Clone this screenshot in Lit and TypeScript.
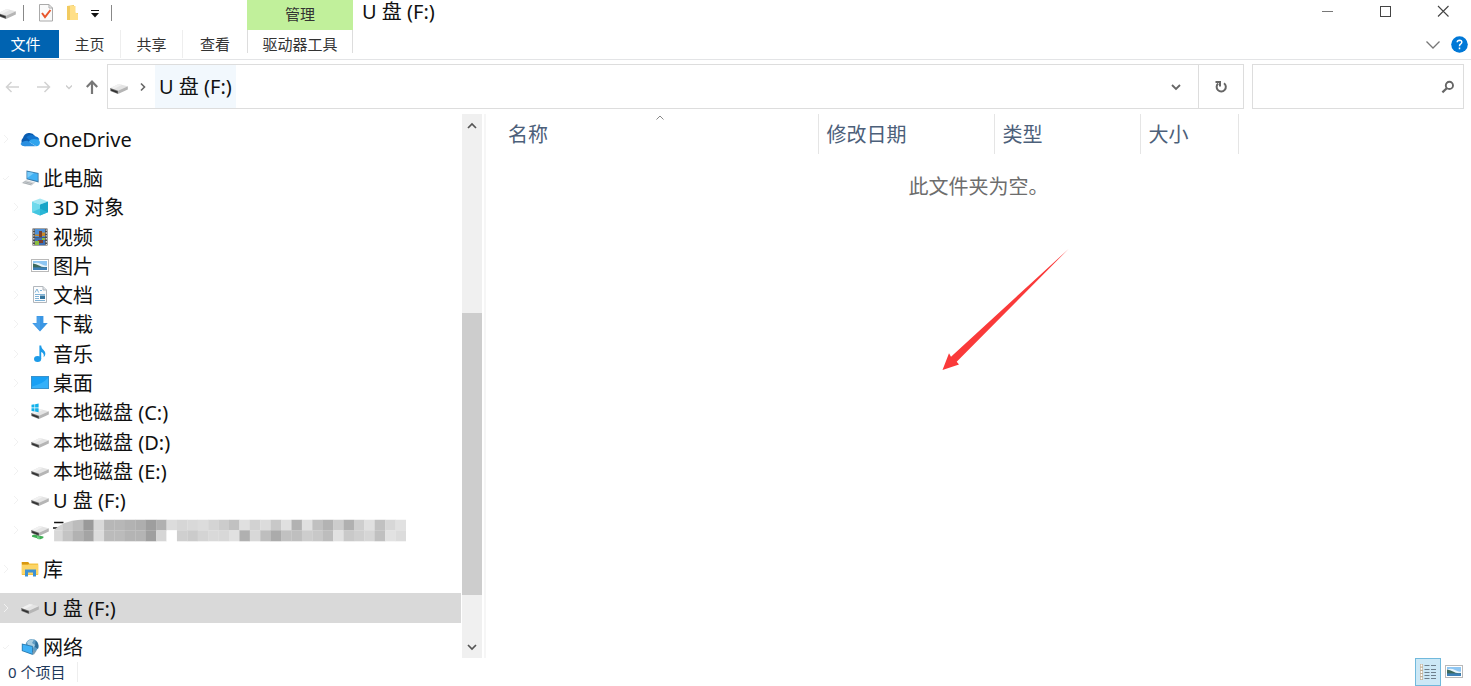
import { LitElement, html, svg, css, type TemplateResult } from "lit";
import { customElement, state } from "lit/decorators.js";

const driveShape = svg`
  <path d="M0.4 6 L8.6 2 L17.8 4.2 L8 9 Z" fill="#e4e4e4"/>
  <path d="M0.4 6 L8.6 2 L12 2.8 L3.6 7.2 Z" fill="#f1f1f1"/>
  <path d="M0.2 6 L8 8.8 V12 L0.4 9 Z" fill="#6a6a6a"/>
  <path d="M1 7.2 L7.4 9.4 V10.9 L1 8.6 Z" fill="#2e2e2e"/>
  <path d="M8 8.8 L17.8 4.2 V7.4 L8 12 Z" fill="#b5b5b5"/>`;

const pictureShape = svg`
  <rect x="0.5" y="2.5" width="17" height="12" fill="#fff" stroke="#b9b9b9"/>
  <rect x="2" y="4" width="14" height="9" fill="#8ec6f2"/>
  <path d="M2 6.4 Q6 4.6 10 7 T16 8.6 V10.4 H2 Z" fill="#e8f4fc"/>
  <path d="M2 6.4 Q5 6.6 8 8.6 T16 10 V11 H2 Z" fill="#3d6a5d"/>
  <rect x="2" y="10.4" width="14" height="2.6" fill="#3d80b8"/>`;

const shapes: Record<string, TemplateResult> = {
  drive: driveShape,
  picture: pictureShape,
  cloud: svg`
    <g transform="translate(-1.6 -1.4) scale(1.14)">
      <path d="M5 15.5 A4.4 4.4 0 0 1 3.2 8 A5.8 5.8 0 0 1 13.6 6.4 L9 12 Z" fill="#0a5cb0"/>
      <path d="M6 7.6 A6 6 0 0 1 14 6.8 A4.6 4.6 0 0 1 17.6 9.4 L12 13 Z" fill="#1374ce"/>
      <path d="M1 13.5 Q3 10.5 7 10.6 L14.5 15.5 H4.4 Q2 15.5 1 13.5 Z" fill="#2a8fe0"/>
      <path d="M8 11.4 Q11 8.6 14.6 9.4 Q18 9.4 18 12.4 Q17.8 15.4 14.8 15.5 Z" fill="#2fa4ee"/>
    </g>`,
  computer: svg`
    <path d="M5.5 1.5 L17.6 4 V13.4 L5.5 10.2 Z" fill="#3e7ca9"/>
    <path d="M6.4 2.7 L16.7 4.8 V12.1 L6.4 9.4 Z" fill="#42b1f4"/>
    <path d="M6.4 2.7 L13 4 L6.4 9 Z" fill="#7accfa"/>
    <path d="M5 11 L14.5 13.4 L10.4 16.6 L0.4 14 Z" fill="#d4d7da"/>
    <path d="M3.5 12.6 L11.6 14.8 M2 13.6 L10.4 15.9" stroke="#979da2" stroke-width=".7"/>`,
  cube: svg`
    <path d="M9 0.6 L17 3.4 L9 6.6 L1 3.4 Z" fill="#a5e8f4"/>
    <path d="M1 3.4 L9 6.6 V17.4 L1 14.2 Z" fill="#6fd9ec"/>
    <path d="M17 3.4 L9 6.6 V17.4 L17 14.2 Z" fill="#18a5c8"/>
    <path d="M9 10.4 L17 14.2 L9 17.4 L1 14.2 Z" fill="#31bddb" opacity=".7"/>`,
  video: svg`
    <rect x="1.5" y="0.5" width="15" height="17" fill="#4b4b4b"/>
    <rect x="4" y="1" width="10" height="8" fill="#4d8fd6"/>
    <rect x="4" y="9.5" width="10" height="7.5" fill="#3c6fb4"/>
    <path d="M4 6.5 H8 V4.5 H14 V8 H4 Z" fill="#c98b2b"/>
    <path d="M8 3 H11 V9 H8 Z M7 12 H12 V15 H7 Z" fill="#7b3f2c"/>
    <path d="M4 13 H8 V17 H4 Z M11 10 H14 V12 H11 Z" fill="#8bbd42"/>
    <path d="M2.8 1.4 V17 M15.3 1.4 V17" stroke="#e6e6e6" stroke-width="1.2" stroke-dasharray="1.4 1.5"/>`,
  document: svg`
    <path d="M2.5 0.5 H12 L15.5 4 V16.5 H2.5 Z" fill="#fbfcfd" stroke="#b2b7bc"/>
    <path d="M12 0.5 V4 H15.5" fill="#dfe3e7" stroke="#b2b7bc"/>
    <path d="M4 6.5 L6 3 L7.6 6.5 M9 4.5 H11 M4 8.5 H14 M4 10.5 H8 M4 12.5 H8 M4 14.5 H14" stroke="#7fb2d6" fill="none"/>
    <rect x="9" y="9.5" width="5" height="3.5" fill="#35759e"/>`,
  download: svg`<path d="M5.6 1 H12.4 V8 H16.8 L9 16.6 L1.2 8 H5.6 Z" fill="#3a96e4"/><path d="M6 1.5 H9 V15 L2 8.5 H6 Z" fill="#54a9ee" opacity=".6"/>`,
  music: svg`
    <ellipse cx="6.6" cy="14" rx="3.6" ry="3" fill="#1c9be8"/>
    <path d="M8.4 0.5 H10.2 C10.4 4.8 15 5.4 14.3 9.2 Q14 11 12.6 12.2 Q13.6 8.4 10.2 7 V14 H8.4 Z" fill="#1c9be8"/>`,
  desktop: svg`
    <rect x="0.5" y="2.5" width="17" height="12" fill="#18a0f5" stroke="#3a92cc"/>
    <path d="M1 12.4 Q11 10.4 17 4 V14 H1 Z" fill="#45b8fb" opacity=".65"/>`,
  system: svg`
    <g transform="translate(0 4)">${driveShape}</g>
    <path d="M0.5 1.8 L3.5 1.3 V4.6 H0.5 Z M4.1 1.2 L7.6 0.6 V4.6 H4.1 Z M0.5 5.2 H3.5 V8.5 L0.5 8 Z M4.1 5.2 H7.6 V9.2 L4.1 8.6 Z" fill="#12b1ea"/>`,
  netdrive: svg`
    <path d="M1 11.4 L3 10.4 L12.4 12.6 V14 L9.4 15.2 L1 12.8 Z" fill="#3fae54"/>
    ${driveShape}
    <path d="M6 12 L8.6 12.6 V15.4 L6 14.8 Z" fill="#70cf83"/>`,
  library: svg`
    <path d="M0.8 2 H7 L8.4 3.6 H17.2 V15 H0.8 Z" fill="#f5c443"/>
    <path d="M0.8 2 H7 L8.2 3.5 L7 4.5 H0.8 Z" fill="#d9980f"/>
    <path d="M0.8 5 H17.2 V14 H0.8 Z" fill="#fcd566"/>
    <path d="M4 16.4 V9.4 H15 V16.4 H12 V12.6 H7 V16.4 Z" fill="#3d91d2"/>`,
  network: svg`
    <circle cx="11" cy="7.6" r="6.6" fill="#5e9cc4"/>
    <path d="M6 4 Q9 0.8 13 1.4 L11 5 L14 7 L12 10 L7 8 Z" fill="#a9cde0"/>
    <path d="M14.6 2.4 Q18.6 6 17 11 L14 9 Z" fill="#2f6e99"/>
    <path d="M0.8 5.4 L11.8 8 V17 L0.8 13 Z" fill="#2878ac"/>
    <path d="M1.6 6.5 L11 8.7 V15.7 L1.6 12.4 Z" fill="#3fb1f6"/>
    <path d="M12 12 L15.4 13 L13 16.4 L12 16.6 Z" fill="#7d9db0"/>`,
};

const icon = (name: string) =>
  html`<svg class="icon" viewBox="0 0 18 18" aria-hidden="true">${shapes[name]}</svg>`;

type Place = { icon: string; label: string; hidden?: boolean; open?: boolean };

const devices: Place[] = [
  { icon: "cube", label: "3D 对象" },
  { icon: "video", label: "视频" },
  { icon: "picture", label: "图片" },
  { icon: "document", label: "文档" },
  { icon: "download", label: "下载" },
  { icon: "music", label: "音乐" },
  { icon: "desktop", label: "桌面" },
  { icon: "system", label: "本地磁盘 (C:)" },
  { icon: "drive", label: "本地磁盘 (D:)" },
  { icon: "drive", label: "本地磁盘 (E:)" },
  { icon: "drive", label: "U 盘 (F:)" },
  { icon: "netdrive", label: "", hidden: true },
];

const mosaic = [
  "d4 c8 bc 9a d9 b7 b7 b2 ae 9e b0 dc d6 d9 dc d4 cc c1 e0 d2 dc c8 e0 b2 e0 c0 b3 cc b0 ce e0 c1 d7 e1",
  "d8 c4 b2 a4 dc bb bb b4 b4 9f d6 ff cf cb d4 d9 d8 e1 b0 d8 be ab c1 bf cd c8 bd e1 c9 cf d6 c0 e2 dc",
].map((row) => row.split(" "));

@customElement("app-root")
export class AppRoot extends LitElement {
  @state() private selected = "root-usb";

  static styles = css`
    :host {
      display: flex;
      flex-direction: column;
      height: 100vh;
      background: #fff;
      color: #111;
      font: 20px/28px "Noto Sans", "Noto Sans CJK SC", sans-serif;
    }
    * { box-sizing: border-box; }
    button, input {
      font: inherit;
      color: inherit;
      background: none;
      border: 0;
      padding: 0;
      margin: 0;
      border-radius: 0;
    }
    svg { display: block; fill: none; flex: none; }
    ul { list-style: none; margin: 0; padding: 0; }
    .icon { width: 18px; height: 18px; overflow: visible; }
    .small { font-size: 15px; line-height: 20px; color: #333; }

    .titlebar { display: flex; height: 30px; flex: none; }
    .quick { display: flex; align-items: center; width: 247px; height: 26px; gap: 7px; }
    .divider { width: 1px; height: 16px; background: #888; }
    .context { width: 106px; background: #c1f09b; text-align: center; padding-top: 4px; }
    .title { margin: 0; padding: 0 9px; font-size: 20px; line-height: 24px; font-weight: 400; flex: 1; }
    .window { display: flex; gap: 44px; padding-right: 21px; height: 22px; align-items: center; }

    .ribbon { display: flex; height: 30px; flex: none; border-bottom: 1px solid #e3e4e6; }
    .tab { width: 62px; height: 28px; border-right: 1px solid #eee; }
    .tab.file { width: 59px; background: #0063b1; color: #fff; padding-right: 8px; border: 0; }
    .tab.last { width: 64px; border: 0; }
    .tab.tools { width: 106px; height: 23px; border: 1px solid #ddd; border-width: 0 1px; padding-top: 4px; }
    .ribbon-end { display: flex; align-items: center; gap: 10px; margin-left: auto; padding-right: 3px; }

    .nav { display: flex; height: 54px; flex: none; padding: 4px 7px 5px 5px; }
    .history { display: flex; align-items: center; width: 102px; gap: 13px; }
    .address { display: flex; flex: 1; border: 1px solid #ddd; align-items: center; }
    .address > .icon { margin: 8px 11px 0 2px; }
    .crumb { align-self: stretch; padding: 0 4px; margin-left: 8px; background: #f2f8fd; }
    .drop { margin-left: auto; width: 44px; display: grid; place-items: center; align-self: stretch; }
    .refresh { width: 45px; display: grid; place-items: center; align-self: stretch; border-left: 1px solid #ddd; }
    .search { display: flex; align-items: center; width: 212px; margin-left: 8px; border: 1px solid #ddd; padding: 0 8px; }
    .search input { flex: 1; min-width: 0; outline: 0; }

    .body { display: flex; flex: 1; min-height: 0; }
    .tree { display: flex; flex-direction: column; width: 461px; gap: 10px; padding-top: 10px; margin-bottom: -4px; }
    .tree > li { flex: 1 1 0; min-height: 0; display: flex; flex-direction: column; }
    .tree > li.group { flex-grow: 13; }
    .group ul { flex: 12 1 0; min-height: 0; display: flex; flex-direction: column; }
    .group ul > li { flex: 1 1 0; min-height: 0; display: flex; }
    .row { flex: 1 1 0; min-height: 0; width: 100%; display: flex; align-items: center; gap: 4px; text-align: left; line-height: 28px; padding-left: 3px; }
    .row.child { padding-left: 13px; }
    .row .twist { width: 14px; height: 8px; }
    .row .label { padding-top: 2px; }
    .row.on { background: #d9d9d9; }
    .drive-low { margin-top: 6px; }
    .redacted { width: 354px; height: 24px; margin-left: -1px; }

    .scroll { display: flex; flex-direction: column; width: 21px; margin-left: 1px; background: #f0f0f0; border-right: 1px solid #fff; }
    .scroll button { height: 23px; display: grid; place-items: center; }
    .track { flex: 1; display: flex; flex-direction: column; }
    .before { flex: 176; }
    .thumb { flex: 282; background: #cdcdcd; }
    .after { flex: 40; }

    .files { position: relative; flex: 1; margin-left: 1px; border-left: 2px solid #f6f6f6; padding-left: 14px; }
    .columns { border-collapse: collapse; table-layout: fixed; width: 739px; color: #4c607a; }
    .columns th { height: 40px; padding: 2px 0 0 8px; font-weight: 400; text-align: left; border-right: 1px solid #e5e5e5; }
    .name { width: 318px; }
    .date { width: 176px; }
    .type { width: 146px; }
    .sorted { position: absolute; top: 1px; left: 170px; }
    .empty { margin: 19px 0 0; padding-right: 14px; text-align: center; color: #6d6d6d; }
    .pointer { position: absolute; left: 455px; top: 135px; }

    .status { display: flex; align-items: center; height: 28px; flex: none; padding: 0 4px 0 8px; background: #fff; z-index: 1; }
    .status .count { color: #1e395b; padding-right: 12px; border-right: 1px solid #eee; }
    .views { display: flex; margin-left: auto; align-self: stretch; }
    .views button { width: 26px; display: grid; place-items: center; }
    .views .on { background: #cce8f6; border: 1px solid #71b9dc; }
  `;

  private twist(open = false) {
    return html`<svg class="twist" viewBox="0 0 14 8" aria-hidden="true">
      <path d=${open ? "M-2 2 L2 6 L6 2" : "M1 0 L5 4 L1 8"} stroke="#f1f1f1"/>
    </svg>`;
  }

  private row(id: string, place: Place, child = false) {
    const low = ["drive", "netdrive"].includes(place.icon);
    return html`<button
      class="row ${child ? "child" : ""} ${this.selected === id ? "on" : ""}"
      aria-label=${place.hidden ? "网络位置" : place.label}
      @click=${() => (this.selected = id)}
    >
      ${this.twist(place.open)}
      <span class=${low ? "drive-low" : ""}>${icon(place.icon)}</span>
      ${place.hidden ? this.redacted() : html`<span class="label">${place.label}</span>`}
    </button>`;
  }

  private redacted() {
    return html`<svg class="redacted" viewBox="0 0 340 24" preserveAspectRatio="none" aria-hidden="true">
      <defs><clipPath id="edge"><path d="M2 24 V12 Q10 3 28 1.5 H340 V24 Z"/></clipPath></defs>
      <path d="M2 4.5 H11 M1 10 H6" stroke="#111" stroke-width="1.4"/>
      <g clip-path="url(#edge)">
        ${mosaic.map((cells, y) =>
          cells.map((c, x) => svg`<rect x=${x * 10} y=${1.5 + y * 10.8} width="10.2" height="11" fill=${`#${c}${c}${c}`}/>`)
        )}
      </g>
    </svg>`;
  }

  render() {
    return html`
      <header class="titlebar">
        <div class="quick">
          <svg width="16" height="18" viewBox="2 0 16 18" aria-hidden="true"><g transform="translate(0 3)">${driveShape}</g></svg>
          <span class="divider"></span>
          <button aria-label="属性">
            <svg width="28" height="18" viewBox="-8 0 28 18">
              <path d="M.5 .5 H10 L13.5 4 V17 H.5 Z" fill="#fafafa" stroke="#aaa"/>
              <path d="M10 .5 V4 H13.5" stroke="#aaa"/>
              <path d="M3 9 L6 13 L11.5 6" stroke="#e8562b" stroke-width="2"/>
            </svg>
          </button>
          <button aria-label="新建文件夹">
            <svg width="13" height="18" viewBox="0 0 13 18">
              <path d="M1 2 L8 1 V9 H12 V16 H1 Z" fill="#f2cb60"/>
              <path d="M4 2 H9.5 V8.5 L12 10 V16 H4 Z" fill="#ffdf87"/>
            </svg>
          </button>
          <button aria-label="自定义快速访问工具栏">
            <svg width="18" height="10" viewBox="-4 -1 18 10"><path d="M1 1.5 H9" stroke="#111"/><path d="M1 4 H9 L5 8.5 Z" fill="#111"/></svg>
          </button>
          <span class="divider"></span>
        </div>
        <div class="context small">管理</div>
        <h1 class="title">U 盘 (F:)</h1>
        <div class="window">
          <button aria-label="最小化"><svg width="14" height="14" viewBox="0 0 14 14"><path d="M2 7.5 H13" stroke="#777"/></svg></button>
          <button aria-label="最大化"><svg width="14" height="14" viewBox="0 0 14 14"><rect x="2.5" y="2.5" width="10" height="10" stroke="#444"/></svg></button>
          <button aria-label="关闭"><svg width="14" height="14" viewBox="0 0 14 14"><path d="M2 2 L12.5 12.5 M12.5 2 L2 12.5" stroke="#444" stroke-width="1.1"/></svg></button>
        </div>
      </header>

      <nav class="ribbon" aria-label="功能区">
        <button class="tab file small">文件</button>
        <button class="tab small">主页</button>
        <button class="tab small">共享</button>
        <button class="tab last small">查看</button>
        <button class="tab tools small">驱动器工具</button>
        <div class="ribbon-end">
          <button aria-label="展开功能区"><svg width="16" height="10" viewBox="0 0 16 10"><path d="M1.5 1.5 L8 8 L14.5 1.5" stroke="#777" stroke-width="1.3"/></svg></button>
          <button aria-label="帮助">
            <svg width="17" height="17" viewBox="0 0 17 17"><circle cx="8.5" cy="8.5" r="8.3" fill="#0078d7"/><path d="M6.2 6.2 Q6.4 4.2 8.6 4.2 Q10.9 4.3 10.8 6.3 Q10.7 7.4 9.5 8.2 Q8.5 8.9 8.5 10.2 M8.5 11.6 V13.2" stroke="#fff" stroke-width="1.5"/></svg>
          </button>
        </div>
      </nav>

      <div class="nav">
        <div class="history">
          <button aria-label="后退"><svg width="15" height="14" viewBox="0 0 15 14"><path d="M14 7 H1.5 M6.5 2 L1.5 7 L6.5 12" stroke="#d2d2d2" stroke-width="1.5"/></svg></button>
          <button aria-label="前进"><svg width="20" height="14" viewBox="-4 0 20 14"><path d="M0 7 H12.5 M7.5 2 L12.5 7 L7.5 12" stroke="#d2d2d2" stroke-width="1.5"/></svg></button>
          <button aria-label="最近位置"><svg width="6" height="8" viewBox="1 0 6 8"><path d="M1 2.5 L4 5.5 L7 2.5" stroke="#ccc" stroke-width="1.3"/></svg></button>
          <button aria-label="向上"><svg width="14" height="16" viewBox="0 0 14 16"><path d="M7 15 V2.5 M1.8 8 L7 2.5 L12.2 8" stroke="#777" stroke-width="2.2"/></svg></button>
        </div>
        <div class="address">
          ${icon("drive")}
          <svg width="8" height="10" viewBox="0 0 8 10" aria-hidden="true"><path d="M2 1.5 L5.5 5 L2 8.5" stroke="#666" stroke-width="1.6"/></svg>
          <button class="crumb">U 盘 (F:)</button>
          <button class="drop" aria-label="以前的位置"><svg width="10" height="8" viewBox="0 0 10 8"><path d="M1 2 L5 6 L9 2" stroke="#666" stroke-width="1.8"/></svg></button>
          <button class="refresh" aria-label="刷新">
            <svg width="14" height="14" viewBox="0 0 14 14"><path d="M10 3.2 A4.6 4.6 0 1 1 4.2 3.4" stroke="#666" stroke-width="2"/><path d="M1.5 2 H6 V6.4" stroke="#666" stroke-width="2"/></svg>
          </button>
        </div>
        <label class="search">
          <input type="text" aria-label="搜索" />
          <svg width="14" height="14" viewBox="0 0 14 14" aria-hidden="true"><circle cx="8.4" cy="5.4" r="3.6" stroke="#666" stroke-width="1.9"/><path d="M6 8 L1.4 12.4" stroke="#666" stroke-width="2.2"/></svg>
        </label>
      </div>

      <main class="body">
        <ul class="tree">
          <li>${this.row("onedrive", { icon: "cloud", label: "OneDrive" })}</li>
          <li class="group">
            ${this.row("pc", { icon: "computer", label: "此电脑", open: true })}
            <ul>${devices.map((d, i) => html`<li>${this.row(`pc-${i}`, d, true)}</li>`)}</ul>
          </li>
          <li>${this.row("library", { icon: "library", label: "库" })}</li>
          <li>${this.row("root-usb", { icon: "drive", label: "U 盘 (F:)" })}</li>
          <li>${this.row("network", { icon: "network", label: "网络", open: true })}</li>
        </ul>
        <div class="scroll">
          <button aria-label="向上滚动"><svg width="10" height="8" viewBox="0 0 10 8"><path d="M1 6 L5 2 L9 6" stroke="#555" stroke-width="1.7"/></svg></button>
          <div class="track"><div class="before"></div><div class="thumb"></div><div class="after"></div></div>
          <button aria-label="向下滚动"><svg width="10" height="8" viewBox="0 0 10 8"><path d="M1 2 L5 6 L9 2" stroke="#555" stroke-width="1.7"/></svg></button>
        </div>
        <section class="files">
          <table class="columns">
            <thead>
              <tr>
                <th class="name">名称</th>
                <th class="date">修改日期</th>
                <th class="type">类型</th>
                <th>大小</th>
              </tr>
            </thead>
          </table>
          <svg class="sorted" width="8" height="5" viewBox="0 0 8 5" aria-hidden="true"><path d="M.5 4.5 L4 1 L7.5 4.5" stroke="#888"/></svg>
          <p class="empty">此文件夹为空。</p>
          <svg class="pointer" width="128" height="122" viewBox="941 249 128 122" aria-hidden="true">
            <path d="M942.5 370 L949 353.3 L951 356.7 L1068.5 249 L956.7 361.7 L959 364.5 Z" fill="#fa3a3a"/>
          </svg>
        </section>
      </main>

      <footer class="status small">
        <span class="count">0 个项目</span>
        <div class="views">
          <button class="on" aria-label="详细信息">
            <svg width="18" height="18" viewBox="0 0 18 18">
              <path d="M5.5 2.5 H10.5 M12 2.5 H17 M5.5 6.5 H10.5 M12 6.5 H17 M5.5 9.5 H10.5 M12 9.5 H17 M5.5 12.5 H10.5 M12 12.5 H17 M5.5 15.5 H10.5 M12 15.5 H17" stroke="#6e7f8c"/>
              <path d="M2.5 1 V17" stroke="#c2b199" stroke-width="3"/>
              <path d="M2.5 1.5 V17" stroke="#fff" stroke-width="1.6" stroke-dasharray="2 1.2"/>
            </svg>
          </button>
          <button aria-label="大缩略图">${icon("picture")}</button>
        </div>
      </footer>
    `;
  }
}
